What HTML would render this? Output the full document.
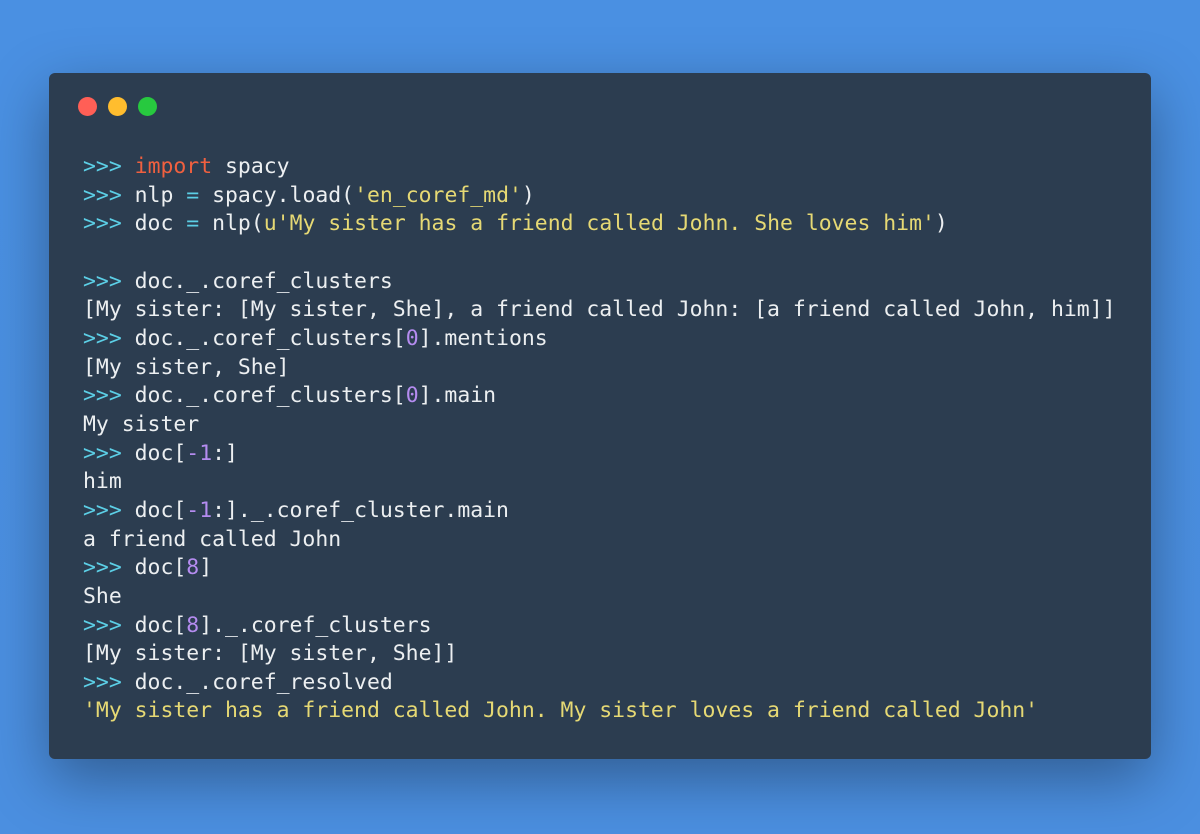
<!DOCTYPE html>
<html><head><style>
html,body{margin:0;padding:0;}
body{width:1200px;height:834px;background:linear-gradient(180deg,#4a90e2 0%,#4b8fe0 100%);position:relative;overflow:hidden;}
.win{position:absolute;left:49px;top:73px;width:1102px;height:686px;background:#2c3d50;border-radius:6px;box-shadow:0 20px 60px rgba(0,0,0,0.35);}
.dot{position:absolute;top:24px;width:19px;height:19px;border-radius:50%;}
pre{position:absolute;left:34px;top:80px;margin:0;font-family:"DejaVu Sans Mono","Liberation Mono",monospace;font-size:21.45px;line-height:28.65px;color:#eceff1;}
.p{color:#5ccfe6}.k{color:#f0603f}.s{color:#e6d974}.n{color:#b58cf0}
</style></head><body>
<div class="win">
<div class="dot" style="left:29px;background:#ff5f56"></div>
<div class="dot" style="left:59px;background:#ffbd2e"></div>
<div class="dot" style="left:89px;background:#27c93f"></div>
<pre><span class="p">&gt;&gt;&gt;</span> <span class="k">import</span> spacy
<span class="p">&gt;&gt;&gt;</span> nlp <span class="p">=</span> spacy.load(<span class="s">'en_coref_md'</span>)
<span class="p">&gt;&gt;&gt;</span> doc <span class="p">=</span> nlp(<span class="s">u'My sister has a friend called John. She loves him'</span>)

<span class="p">&gt;&gt;&gt;</span> doc._.coref_clusters
[My sister: [My sister, She], a friend called John: [a friend called John, him]]
<span class="p">&gt;&gt;&gt;</span> doc._.coref_clusters[<span class="n">0</span>].mentions
[My sister, She]
<span class="p">&gt;&gt;&gt;</span> doc._.coref_clusters[<span class="n">0</span>].main
My sister
<span class="p">&gt;&gt;&gt;</span> doc[<span class="n">-1</span>:]
him
<span class="p">&gt;&gt;&gt;</span> doc[<span class="n">-1</span>:]._.coref_cluster.main
a friend called John
<span class="p">&gt;&gt;&gt;</span> doc[<span class="n">8</span>]
She
<span class="p">&gt;&gt;&gt;</span> doc[<span class="n">8</span>]._.coref_clusters
[My sister: [My sister, She]]
<span class="p">&gt;&gt;&gt;</span> doc._.coref_resolved
<span class="s">'My sister has a friend called John. My sister loves a friend called John'</span></pre>
</div>
</body></html>
